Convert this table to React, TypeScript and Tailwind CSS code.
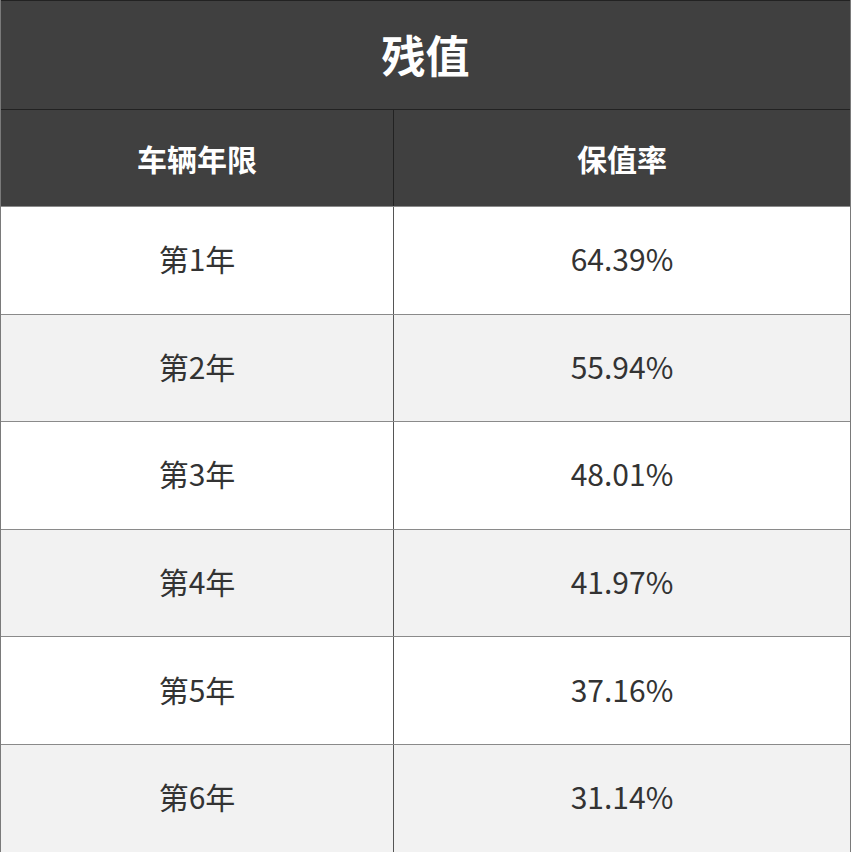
const rows = [
  { year: "第1年", rate: "64.39%" },
  { year: "第2年", rate: "55.94%" },
  { year: "第3年", rate: "48.01%" },
  { year: "第4年", rate: "41.97%" },
  { year: "第5年", rate: "37.16%" },
  { year: "第6年", rate: "31.14%" },
];

export default function App() {
  return (
    <div
      className="w-[852px] h-[852px] bg-white"
      style={{ fontFamily: '"Noto Sans CJK SC", "Noto Sans", sans-serif' }}
    >
      <div className="w-[851px] border-l border-r border-b border-[#7a7a7a]">
        <div className="flex h-[110px] items-center justify-center border-t border-b border-[#222] bg-[#404040] pb-[2px] text-[44px] font-bold text-white">
          残值
        </div>
        <div className="grid h-[96px] grid-cols-[393px_1fr] bg-[#404040] text-[30px] font-bold text-white">
          <div className="flex items-center justify-center border-r border-[#222]">车辆年限</div>
          <div className="flex items-center justify-center">保值率</div>
        </div>
        {rows.map((row, i) => (
          <div
            key={row.year}
            className={`grid h-[107.6px] grid-cols-[393px_1fr] border-t border-[#8a8a8a] text-[30px] text-[#333] ${
              i % 2 === 1 ? "bg-[#f2f2f2]" : "bg-white"
            }`}
          >
            <div className="flex items-center justify-center border-r border-[#555] pb-[3px]">{row.year}</div>
            <div className="flex items-center justify-center pb-[3px]">{row.rate}</div>
          </div>
        ))}
      </div>
    </div>
  );
}
